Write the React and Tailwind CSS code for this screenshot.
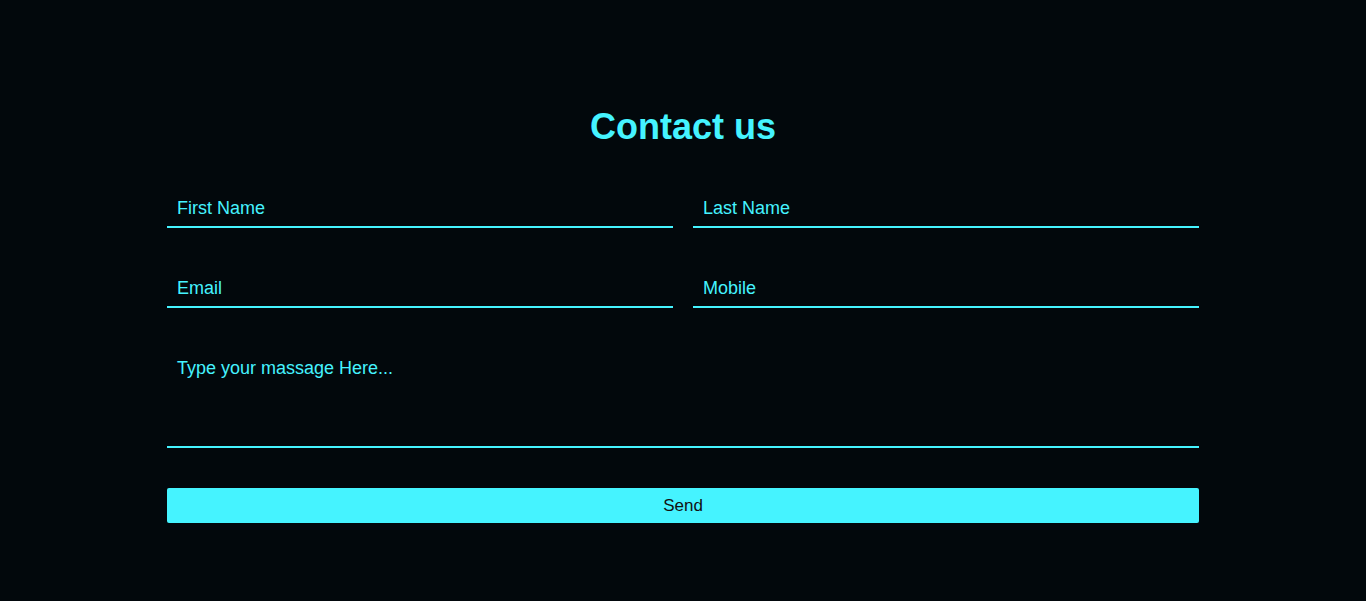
export default function App() {
  const field =
    "h-[40px] w-full border-b-2 border-[#45f3ff] bg-transparent px-[10px] pt-[3px] text-[18px] text-[#45f3ff] outline-none placeholder:text-[#45f3ff]";
  return (
    <div className="min-h-screen w-full bg-[#02080c] pt-[106px] font-['Liberation_Sans',Arial,sans-serif]">
      <div className="mx-auto w-[1032px]">
        <h1 className="text-center text-[36px] font-bold leading-[41px] text-[#45f3ff]">Contact us</h1>
        <form className="mt-[41px] grid grid-cols-2 gap-x-[20px] gap-y-[40px]" onSubmit={(e) => e.preventDefault()}>
          <input type="text" placeholder="First Name" className={field} />
          <input type="text" placeholder="Last Name" className={field} />
          <input type="email" placeholder="Email" className={field} />
          <input type="text" placeholder="Mobile" className={field} />
          <textarea
            placeholder="Type your massage Here..."
            className="col-span-2 h-[100px] w-full resize-none border-b-2 border-[#45f3ff] bg-transparent px-[10px] pt-[7px] pb-[10px] text-[18px] text-[#45f3ff] outline-none placeholder:text-[#45f3ff]"
          />
          <button
            type="submit"
            className="col-span-2 h-[35px] w-full rounded-[2px] bg-[#45f3ff] text-[17px] text-[#111]"
          >
            Send
          </button>
        </form>
      </div>
    </div>
  );
}
